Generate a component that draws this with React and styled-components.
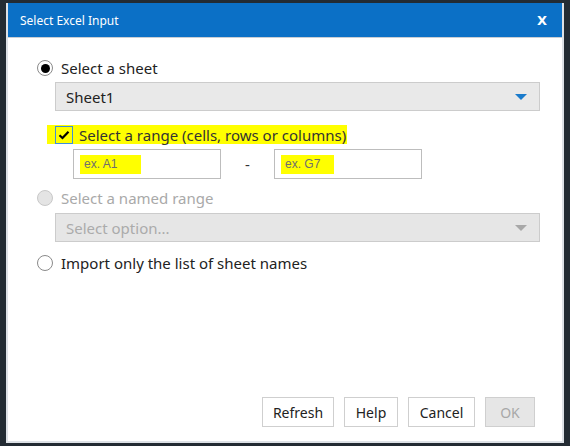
import React from 'react'
import styled, {createGlobalStyle} from 'styled-components'

const GlobalStyle = createGlobalStyle`
  html, body {
    margin: 0;
    padding: 0;
    background: #232b33;
  }
  body {
    font-family: "Noto Sans", "Open Sans", sans-serif;
  }
`;

const Page = styled.div`
  width: 570px;
  height: 446px;
  padding: 3px 0 0 6px;
  box-sizing: border-box;
`;

const Dialog = styled.div`
  width: 558px;
  height: 440px;
  box-sizing: border-box;
  border: 2px solid #dde1e6;
  border-top: none;
  background: #fff;
  display: flex;
  flex-direction: column;
`;

const TitleBar = styled.div`
  height: 34px;
  background: #0b70c6;
  border-bottom: 1px solid #c9ced4;
  display: flex;
  align-items: center;
  justify-content: space-between;
  padding: 0 15px 0 12px;
  color: #fff;
  font-size: 12px;
`;

const Close = styled.span`
  font-family: "DejaVu Sans", sans-serif;
  font-weight: bold;
  font-size: 13px;
`;

const Body = styled.div`
  flex: 1;
  padding: 19px 22px 0 28px;
  display: flex;
  flex-direction: column;
`;

const OptionRow = styled.label`
  display: flex;
  align-items: center;
  height: 22px;
  font-size: 15px;
  color: ${p => p.disabled ? '#a9a9a9' : '#222'};
  margin-top: ${p => p.top || 0}px;
`;

const Radio = styled.span`
  width: 16px;
  height: 16px;
  box-sizing: border-box;
  border-radius: 50%;
  border: 1px solid ${p => p.disabled ? '#c8c8c8' : '#8a8a8a'};
  background: ${p => p.disabled ? '#e4e4e4' : '#fff'};
  display: flex;
  align-items: center;
  justify-content: center;
  margin-right: 8px;
  margin-left: 1px;
  &::after {
    content: '';
    display: ${p => p.checked ? 'block' : 'none'};
    width: 9px;
    height: 9px;
    border-radius: 50%;
    background: #000;
  }
`;

const Select = styled.div`
  margin: ${p => p.top || 0}px 0 0 19px;
  height: 29px;
  box-sizing: border-box;
  border: 1px solid #cccccc;
  background: ${p => p.disabled ? '#e6e6e6' : '#e9e9e9'};
  display: flex;
  align-items: center;
  justify-content: space-between;
  padding: 0 12px 0 10px;
  font-size: 15px;
  color: ${p => p.disabled ? '#ababab' : '#222'};
`;

const Caret = styled.span`
  width: 0;
  height: 0;
  border-left: 6px solid transparent;
  border-right: 6px solid transparent;
  border-top: 6px solid ${p => p.disabled ? '#a8a8a8' : '#1a7bcc'};
`;

const Highlight = styled.span`
  display: inline-block;
  box-sizing: border-box;
  width: ${p => p.w}px;
  padding: 2px 0 3px 4px;
  background: #ffff00;
`;

const CheckRow = styled.div`
  margin: 14px 0 0 11px;
  display: flex;
  align-items: center;
  height: 19px;
  width: 300px;
  background: #ffff00;
  font-size: 15px;
  color: #333;
`;

const CheckBox = styled.span`
  width: 18px;
  height: 18px;
  box-sizing: border-box;
  border: 1px solid #3d8fdc;
  margin: 0 6px 0 8px;
  display: flex;
  align-items: center;
  justify-content: center;
`;

const RangeRow = styled.div`
  display: flex;
  align-items: center;
  margin: 5px 0 0 37px;
`;

const RangeInput = styled.div`
  width: 148px;
  height: 30px;
  box-sizing: border-box;
  border: 1px solid #bdbdbd;
  display: flex;
  align-items: center;
  padding-left: 6px;
  font-family: "Liberation Sans", Arial, sans-serif;
  font-size: 12px;
  color: #6f6f6f;
`;

const Dash = styled.span`
  width: 53px;
  text-align: center;
  font-size: 15px;
  color: #333;
`;

const Footer = styled.div`
  display: flex;
  justify-content: flex-end;
  gap: 10px;
  padding: 0 27px 14px 0;
`;

const Button = styled.button`
  height: 30px;
  min-width: ${p => p.w}px;
  box-sizing: border-box;
  border: 1px solid #cfcfcf;
  background: ${p => p.disabled ? '#e6e6e6' : '#fff'};
  color: ${p => p.disabled ? '#a8a8a8' : '#222'};
  font-family: "Noto Sans", sans-serif;
  font-size: 14px;
  padding: 0;
`;

const Check = () => (
  <svg width="12" height="10" viewBox="0 0 12 10">
    <path d="M1.5 5.2 L4.5 8 L10.5 1.8" fill="none" stroke="#000" strokeWidth="2.2" />
  </svg>
);

export default function App() {
  return (
    <Page>
      <GlobalStyle />
      <Dialog>
        <TitleBar>
          <span>Select Excel Input</span>
          <Close>X</Close>
        </TitleBar>
        <Body>
          <OptionRow>
            <Radio checked />
            Select a sheet
          </OptionRow>
          <Select top={3}>
            <span>Sheet1</span>
            <Caret />
          </Select>
          <CheckRow>
            <CheckBox><Check /></CheckBox>
            Select a range (cells, rows or columns)
          </CheckRow>
          <RangeRow>
            <RangeInput><Highlight w={61}>ex. A1</Highlight></RangeInput>
            <Dash>-</Dash>
            <RangeInput><Highlight w={53}>ex. G7</Highlight></RangeInput>
          </RangeRow>
          <OptionRow disabled top={8}>
            <Radio disabled />
            Select a named range
          </OptionRow>
          <Select top={4} disabled>
            <span>Select option...</span>
            <Caret disabled />
          </Select>
          <OptionRow top={10}>
            <Radio />
            Import only the list of sheet names
          </OptionRow>
        </Body>
        <Footer>
          <Button w={72}>Refresh</Button>
          <Button w={54}>Help</Button>
          <Button w={67}>Cancel</Button>
          <Button w={50} disabled>OK</Button>
        </Footer>
      </Dialog>
    </Page>
  );
}
